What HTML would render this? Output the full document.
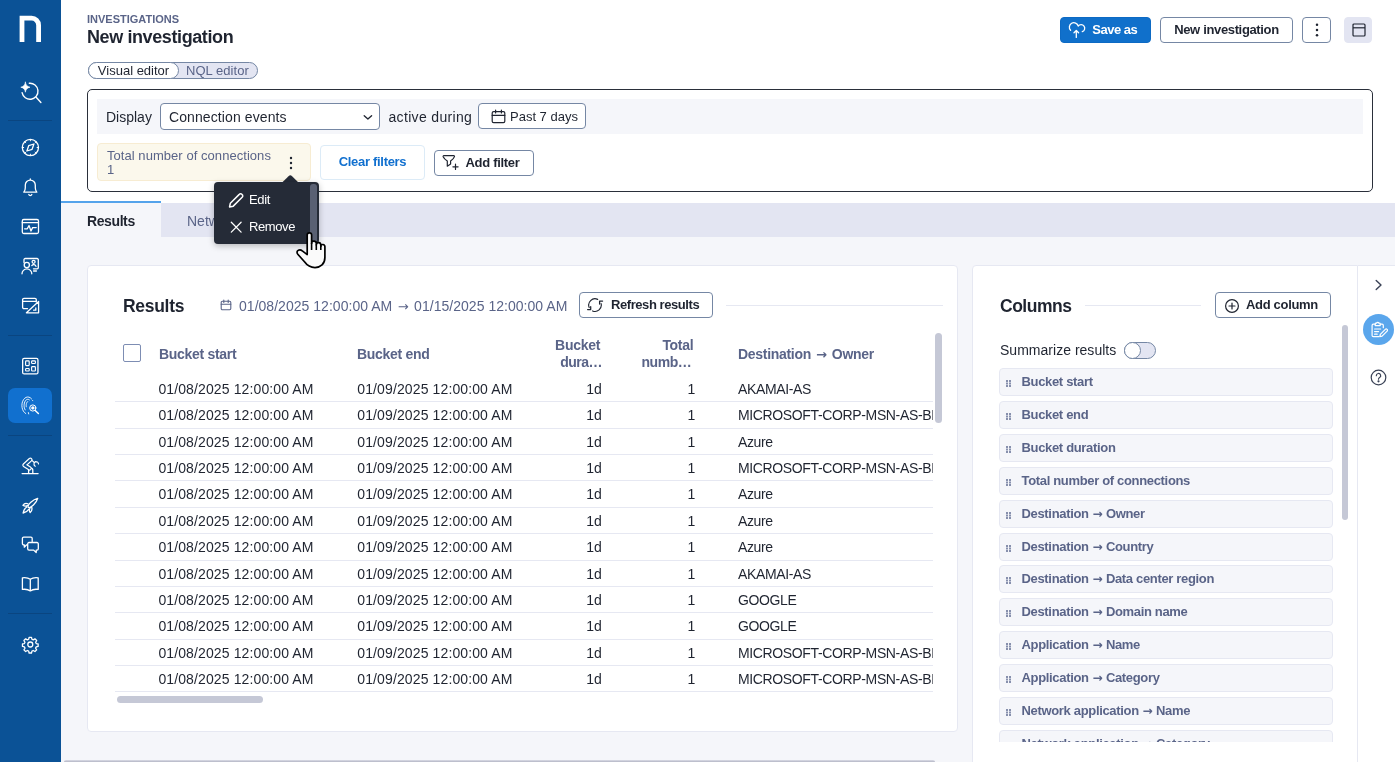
<!DOCTYPE html>
<html lang="en"><head><meta charset="utf-8"><title>New investigation</title>
<style>
*{box-sizing:border-box;margin:0;padding:0}
html,body{width:1395px;height:762px;overflow:hidden}
body{font-family:"Liberation Sans",sans-serif;color:#1f2430;background:#f5f6fa;position:relative;font-size:14px}
.abs{position:absolute}
svg{display:block}
/* sidebar */
#side{position:absolute;left:0;top:0;width:61px;height:762px;background:#0b5296}
#side .sep{position:absolute;left:8px;width:44px;height:1px;background:#0a4580}
#side .ic{position:absolute;left:18px;width:24px;height:24px}
#side .ic svg{width:24px;height:24px;fill:none;stroke:#fff;stroke-width:1.4;stroke-linecap:round;stroke-linejoin:round}
#side .act{position:absolute;left:8px;top:388px;width:44px;height:35px;border-radius:7px;background:#1170cf}
/* header */
#hdr{position:absolute;left:61px;top:0;width:1334px;height:203px;background:#fff}
.crumb{position:absolute;left:87px;top:13px;font-size:11px;font-weight:700;color:#5a6488;letter-spacing:0;line-height:13px}
.title{position:absolute;left:87px;top:25px;font-size:18px;font-weight:700;color:#1f2430;line-height:24px;letter-spacing:-.4px}
.btn{padding-bottom:1.500px;position:absolute;height:26px;border:1px solid #7587a4;border-radius:4px;background:#fff;font-weight:700;font-size:13px;color:#1f2430;display:flex;align-items:center;justify-content:center;white-space:nowrap}

.savebtn{background:#1070cb;border-color:#0d6ac4;color:#fff}
.pill{position:absolute;left:88px;top:62px;width:170px;height:17px;border:1px solid #7587a4;border-radius:9px;background:#e3e5f2;font-size:13px;line-height:15px;color:#5a6488}
.pill .on{position:absolute;left:-1px;top:-1px;width:91px;height:17px;border:1px solid #7587a4;border-radius:9px;background:#fff;color:#1f2430;text-align:center}
.pill .off{position:absolute;left:97px;top:-1px;line-height:17px;font-size:13px;letter-spacing:.05px}
#qbox{position:absolute;left:87px;top:89px;width:1285.500px;height:103px;border:1.3px solid #2a2f3a;border-radius:5px;background:#fff}
#qrow{position:absolute;left:97px;top:99px;width:1266px;height:35px;background:#f5f6fa}
.t14{position:absolute;font-size:14px;line-height:18px;white-space:nowrap}
.sel{position:absolute;left:160px;top:103px;width:220px;height:27px;border:1px solid #7587a4;border-radius:4px;background:#fff}
.chip{position:absolute;left:97px;top:143px;width:214px;height:38px;background:#fbf8ec;border:1px solid #f7ecd2;border-radius:4px}
.clear{border-color:#dcebf7;color:#1170cf;height:35px;border-radius:4px}
#tabs{position:absolute;left:61px;top:203px;width:1334px;height:34px;background:#e3e5f2}
#tabR{position:absolute;left:61px;top:201px;width:100px;height:36px;background:#f5f6fa;border-top:2px solid #54a3eb}
.pop{z-index:10;position:absolute;left:214px;top:182px;width:105px;height:62px;background:#252b37;border-radius:4px;box-shadow:0 2px 6px rgba(0,0,0,.25)}
.pop .sb{position:absolute;left:96px;top:2px;width:7px;height:57px;background:#596073;border-radius:3px 3px 0 0}
.pop .mi{position:absolute;left:35px;color:#fff;font-size:13px;line-height:16px;letter-spacing:-.15px}
.pop svg{position:absolute;left:14px;width:16px;height:16px;stroke:#fff;fill:none;stroke-width:1.3;stroke-linecap:round;stroke-linejoin:round}

#card{position:absolute;left:87px;top:265px;width:871px;height:467px;background:#fff;border:1px solid #e6e8f2;border-radius:4px}
#rcard{position:absolute;left:972px;top:265px;width:386px;height:510px;background:#fff;border:1px solid #e6e8f2;border-radius:4px 0 0 0}
#rail{position:absolute;left:1358px;top:265px;width:37px;height:497px;background:#fff;border-top:1px solid #e6e8f2}
.h2{position:absolute;font-size:19px;font-weight:700;line-height:24px;color:#1f2430;white-space:nowrap}
.th{margin-top:.6px;position:absolute;font-size:14px;font-weight:700;color:#5a6488;line-height:17px;white-space:nowrap;letter-spacing:-.3px}
#tbl{position:absolute;left:115px;top:376px;width:818px;height:320px;overflow:hidden}
.tr{position:relative;height:26.360px;border-bottom:1px solid #e6e8f2;font-size:14px;line-height:26.360px;color:#1f2430;white-space:nowrap}
.tr span{position:absolute;top:0;letter-spacing:.12px}
.c1{left:43.400px}.c2{left:242.300px}.c3{right:331px}.c4{right:237.500px}.tr span.c5{left:623px;letter-spacing:-.36px}
.ar{font-family:"DejaVu Sans","Liberation Sans",sans-serif;line-height:1}.col b{font-family:"DejaVu Sans","Liberation Sans",sans-serif;font-weight:700;font-size:12px;margin:0 .47px;line-height:1}.col{position:absolute;left:0;width:334px;height:28px;background:#f5f6fa;border:1px solid #e6e8f2;border-radius:4px;font-size:13px;font-weight:700;color:#5a6488;line-height:26px;padding-left:21.500px;white-space:nowrap;letter-spacing:-.33px}
.col i{position:absolute;left:6px;top:11px;width:2px;height:1.500px;background:#8790ad;box-shadow:3px 0 #8790ad,0 2.500px #8790ad,3px 2.500px #8790ad,0 5px #8790ad,3px 5px #8790ad}
#cols{position:absolute;left:999px;top:368px;width:334px;height:374px;overflow:hidden}
</style></head><body><div id="wrap" style="will-change:transform;position:absolute;left:0;top:0;width:1395px;height:762px">
<div id="hdr"></div>
<div id="side">
  <div class="sep" style="top:120px"></div>
  <div class="sep" style="top:335px"></div>
  <div class="act"></div>
  <div class="sep" style="top:435px"></div>
  <div class="sep" style="top:613px"></div>
</div>

<svg class="abs" style="left:0;top:0" width="61" height="762" viewBox="0 0 61 762" fill="none" stroke="#fff" stroke-width="1.300" stroke-linecap="round" stroke-linejoin="round">
 <!-- logo -->
 <path d="M22 41.900V18.200H31.600a7 7 0 0 1 7 7V41.900" stroke-width="4.800" stroke-linecap="butt" stroke-linejoin="miter"/>
 <!-- ai search -->
 <path d="M29.300 83.300A8 8 0 1 1 22.100 92.700M35.900 97l5 5.400" stroke-width="1.400"/>
 <path d="M25.400 82.200c.5 3 1.600 4.300 4.600 5-3 .7-4.100 2-4.600 5-.5-3-1.600-4.300-4.600-5 3-.7 4.100-2 4.600-5z" fill="#fff" stroke-width=".6"/>
 <!-- compass -->
 <circle cx="30.400" cy="147.500" r="8.100"/>
 <path d="M33.900 144l-1.800 5.300-5.200 1.700 1.800-5.300z"/>
 <path d="M30.400 139.400v1.400M30.400 154.200v1.400M22.300 147.500h1.400M37.100 147.500h1.400M24.700 141.800l1 1M35.100 152.200l1 1M36.100 141.800l-1 1M25.700 152.200l-1 1" stroke-width="1"/>
 <!-- bell -->
 <path d="M23.800 192.200h13c-1.100-1.300-1.500-2.600-1.500-4.500v-2.600a5 5 0 0 0-10 0v2.600c0 1.900-.4 3.200-1.500 4.500zM30.300 179v1.100M28.800 194.500a1.600 1.600 0 0 0 3 0"/>
 <!-- monitor -->
 <rect x="22.300" y="219.500" width="16.200" height="14" rx="1.500"/>
 <path d="M22.300 222.700h16.200M24.600 228.800h2.700l1.700-3.200 2 5.400 1.600-3.400h3.600"/>
 <!-- users -->
 <path d="M24 262.500v-2.800a1.200 1.200 0 0 1 1.200-1.200h11.900a1.200 1.200 0 0 1 1.200 1.200v7.900a1.200 1.200 0 0 1-1.200 1.200h-3.600M33.600 271h2.800"/>
 <circle cx="26.800" cy="265" r="2.600"/><path d="M22 273.800a4.900 4.900 0 0 1 9.800 0"/>
 <circle cx="33.600" cy="261.800" r="1.500"/><path d="M31.800 265.600a2.400 2.400 0 0 1 4.200.8"/>
 <!-- edit window -->
 <path d="M36.300 302v-2.300a1.400 1.400 0 0 0-1.400-1.400H24a1.400 1.400 0 0 0-1.400 1.400v7.600a1.400 1.400 0 0 0 1.400 1.400h3.500M22.600 301.300h13.700"/>
 <path d="M38.600 301.500v11.300H26.400zM35.800 308v2.200h-2.200" />
 <!-- apps -->
 <rect x="22.650" y="358.450" width="15.300" height="15.500" rx="1.500"/>
 <g stroke-width="1.150"><rect x="25.600" y="360.900" width="3.600" height="4.700" rx=".8"/><rect x="31.600" y="360.900" width="3.800" height="2.600" rx=".8"/>
 <rect x="25.600" y="368.500" width="3.600" height="2.500" rx=".8"/><rect x="31.600" y="366.600" width="3.800" height="4.400" rx=".8"/></g>
 <!-- fingerprint search -->
 <g stroke-width=".9">
 <path d="M31.59 398.99 L30.36 397.84 L28.97 397.17 L27.51 397.01 L26.06 397.38 L24.72 398.25 L23.58 399.56 L22.69 401.25 L22.12 403.20 L21.90 405.29 L22.05 407.39 L22.55 409.38 L23.38 411.12 L24.48 412.52 L25.78 413.49 M29.36 399.88 L28.67 399.47 L27.94 399.30 L27.20 399.38 L26.49 399.70 L25.83 400.25 L25.25 401.01 L24.77 401.94 L24.41 403.02 L24.18 404.20 L24.10 405.42 L24.16 406.65 L24.37 407.84 L24.72 408.93 L25.18 409.88 M27.80 401.70 L27.58 401.74 L27.37 401.84 L27.16 402.02 L26.97 402.26 L26.79 402.56 L26.63 402.92 L26.49 403.32 L26.38 403.77 L26.29 404.24 L26.23 404.75 L26.20 405.26 L26.20 405.78 L26.24 406.30 L26.30 406.80 M28.400 412.600l.3 1.300M32.600 400.500l.1.200"/>
 <circle cx="32.800" cy="408" r="3.100" fill="#1170cf" stroke-width="1"/><circle cx="32.800" cy="408" r="1.400" fill="#fff" stroke-width=".4"/><path d="M35.200 410.400l3.200 3.200" stroke-width="1.400"/>
 </g>
 <!-- robot arm -->
 <path d="M22.100 473.600H38.100M28.600 473.400V470.300a2.100 2.100 0 0 1 4.200 0V473.400"/>
 <path d="M30.400 459.700 24.400 465.100 29.600 468.400" stroke-width="4.300"/>
 <path d="M30.400 459.700 24.400 465.100 29.600 468.400" stroke="#0b5296" stroke-width="1.900"/>
 <path d="M32.200 460.600l2 1.900M35.900 461.700a2.500 2.500 0 0 0-.700 4.600M35.600 461.600a2.600 2.600 0 0 1 2.900 2.300" stroke-width="1.200"/>
 <!-- rocket -->
 <path d="M28.200 507.400C30.720 508.590 36.470 502.800 37.700 498.300C33.150 499.340 27.120 504.830 28.200 507.400Z"/>
 <path d="M27.900 503.900C26 503 24 503.800 22.900 505.300C24.500 506.300 26.300 506.100 27.500 505.600M31.700 507.300C32.300 509.400 31.700 511.400 30.200 512.600C29.200 511 29.300 509.300 29.900 508.300M26.500 507.300C24.600 508.600 23.400 510.600 23.100 513C25.400 512.600 27.400 511.400 28.700 509.400"/>
 <!-- chat -->
 <path d="M32.200 541.500v-3a1.300 1.300 0 0 0-1.300-1.300h-7.200a1.300 1.300 0 0 0-1.300 1.300v5a1.300 1.300 0 0 0 1.300 1.300h.6v2.400l2.300-2.400h.6"/>
 <path d="M29 542.500h8a1.300 1.300 0 0 1 1.300 1.300v5a1.300 1.300 0 0 1-1.300 1.300h-.8v2.500l-2.500-2.500H29a1.300 1.300 0 0 1-1.300-1.300v-5a1.300 1.300 0 0 1 1.300-1.300z"/>
 <!-- book -->
 <path d="M30.300 579.300c-2-1.500-4.600-1.900-7.900-1.500v11.600c3.300-.4 5.900 0 7.900 1.500 2-1.500 4.600-1.900 7.900-1.500v-11.600c-3.300-.4-5.900 0-7.900 1.500zM30.300 579.300v11.600"/>
 <!-- gear -->
 <g transform="translate(30.300 644.500) scale(.86) translate(-30.300 -644.500)" stroke-width="1.500">
 <circle cx="30.300" cy="644.500" r="2.900"/>
 <path d="M28.900 636.200h2.800l.5 2.200 1.500.7 2-1.200 2 2-1.200 2 .7 1.500 2.200.5v2.800l-2.200.5-.7 1.500 1.200 2-2 2-2-1.200-1.500.7-.5 2.200h-2.800l-.5-2.200-1.500-.7-2 1.200-2-2 1.200-2-.7-1.500-2.200-.5v-2.800l2.200-.5.700-1.500-1.200-2 2-2 2 1.200 1.500-.7z"/>
</g>
</svg>
<div class="crumb">INVESTIGATIONS</div>
<div class="title">New investigation</div>

<div class="btn savebtn" style="left:1060px;top:17px;width:91px;justify-content:flex-start;padding-left:31.300px;letter-spacing:-.5px">Save as
 <svg class="abs" style="left:6px;top:3px" width="20" height="20" viewBox="0 0 20 20" fill="none" stroke="#fff" stroke-width="1.300" stroke-linecap="round" stroke-linejoin="round"><path d="M3.600 9.300A4.500 4.500 0 1 1 11.200 5A3.650 3.650 0 1 1 15.300 10.700"/><path d="M9.300 16.400V9.600M7 11.800 9.300 9.500l2.300 2.300"/></svg>
</div>
<div class="btn" style="left:1160px;top:17px;width:133px;letter-spacing:-.35px">New investigation</div>
<div class="btn" style="left:1302px;top:17px;width:29px;padding-bottom:0"><svg width="4" height="14" viewBox="0 0 4 14" fill="#1f2430"><circle cx="2" cy="1.800" r="1.250"/><circle cx="2" cy="7" r="1.250"/><circle cx="2" cy="12.200" r="1.250"/></svg></div>
<div class="btn" style="left:1344px;top:17px;width:28px;border-color:#e3e5f2;background:#e3e5f2;padding-bottom:0;padding-left:1px"><svg width="14" height="14" viewBox="0 0 14 14" fill="none" stroke="#1f2430" stroke-width="1.2"><rect x="1" y="1" width="12" height="12" rx="1"/><path d="M1 4.8h12"/></svg></div>

<div class="pill"><div class="on">Visual editor</div><div class="off">NQL editor</div></div>

<div id="qbox"></div>
<div id="qrow"></div>
<div class="t14" style="left:106px;top:108px">Display</div>
<div class="sel"><div class="t14" style="left:8px;top:4px;letter-spacing:.1px">Connection events</div>
 <svg class="abs" style="left:201px;top:9px" width="11" height="8" viewBox="0 0 11 8" fill="none" stroke="#1f2430" stroke-width="1.300" stroke-linecap="round" stroke-linejoin="round"><path d="M2.200 2.700 5.900 6.100l3.700-3.400"/></svg></div>
<div class="t14" style="left:388.500px;top:108px;letter-spacing:.33px">active during</div>
<div class="btn" style="left:478px;top:103px;width:108px;font-weight:400;justify-content:flex-start;padding-left:31px;padding-bottom:0">Past 7 days
 <svg class="abs" style="left:12px;top:5px" width="15" height="15" viewBox="0 0 15 15" fill="none" stroke="#1f2430" stroke-width="1.2" stroke-linecap="round" stroke-linejoin="round"><rect x="1.2" y="2.6" width="12.6" height="11" rx="1.4"/><path d="M1.2 6.4h12.6M4.6 1v3M10.4 1v3"/></svg>
</div>

<div class="chip">
 <div class="abs" style="left:9px;top:5px;font-size:13px;line-height:14px;color:#5a6488;white-space:nowrap;letter-spacing:.05px">Total number of connections</div>
 <div class="abs" style="left:9px;top:19px;font-size:13px;line-height:14px;color:#5a6488">1</div>
 <svg class="abs" style="left:191px;top:12px" width="4" height="14" viewBox="0 0 4 14" fill="#1f2430"><circle cx="2" cy="2" r="1.2"/><circle cx="2" cy="7" r="1.2"/><circle cx="2" cy="12" r="1.2"/></svg>
</div>
<div class="btn clear" style="left:320px;top:145px;width:105px;letter-spacing:-.3px">Clear filters</div>
<div class="btn" style="left:434px;top:150px;width:100px;justify-content:flex-start;padding-left:30.500px;letter-spacing:-.3px">Add filter
 <svg class="abs" style="left:7px;top:3px" width="18" height="18" viewBox="0 0 18 18" fill="none" stroke="#1f2430" stroke-width="1.200" stroke-linecap="round" stroke-linejoin="round"><path d="M1.800 1.700H11.800a.7.7 0 0 1 .65.950C11.900 4.400 10.400 5.700 8.600 7V10.100L5.300 12.200V7C3.500 5.700 2 4.400 1.150 2.650a.7.7 0 0 1 .65-.950z"/><path d="M13.500 10.200v5.200M10.900 12.800h5.200"/></svg>
</div>

<div id="tabs"></div>
<div id="tabR"></div>
<div class="t14" style="left:87px;top:211.500px;font-weight:700;letter-spacing:-.4px">Results</div>
<div class="t14" style="left:187px;top:211.500px;color:#5a6488">Network</div>

<div class="abs" style="z-index:9;left:284.200px;top:177.300px;width:12.600px;height:12.600px;background:#252b37;border-radius:2.500px 0 0 0;transform:rotate(45deg)"></div>
<div class="pop">
 <div class="sb"></div>
 <svg style="top:8.700px;left:12.500px;width:18.500px;height:18.500px" viewBox="0 0 16 16"><path d="M2.2 13.8l.7-3.2 7.7-7.7a1.55 1.55 0 0 1 2.3 0l.2.2a1.55 1.55 0 0 1 0 2.300L5.400 13.100z"/></svg>
 <div class="mi" style="top:10px;letter-spacing:-.35px">Edit</div>
 <svg style="top:36.500px" viewBox="0 0 16 16"><path d="M3.300 3.300l9.800 9.800M13.100 3.300l-9.800 9.800"/></svg>
 <div class="mi" style="top:36.700px;letter-spacing:-.4px">Remove</div>
</div>
<svg class="abs" style="left:290px;top:225px;z-index:20" width="40" height="48" viewBox="0 0 40 48"><path d="M17.200 29.600V10.100a2.200 2.200 0 0 1 4.400 0v8.300a2.350 2.350 0 0 1 4.700 .2v1.200a2.250 2.250 0 0 1 4.500 .3v1.300a2.050 2.050 0 0 1 4.100 .3V32.500C34.900 39 30.500 42.600 25 42.600c-5 0-8-2.300-10.500-5.800L7.800 29.200c-1.300-1.600-.9-3.300 .5-4 1.300-.7 2.900-.3 4 .7z" fill="#fafafa" stroke="#000" stroke-width="1.700" stroke-linejoin="round"/><path d="M21.600 18v7M26.300 19.500v5.500M30.800 21v4" stroke="#000" stroke-width="1.600" stroke-linecap="butt"/></svg>

<div id="card"></div>
<div class="h2" style="left:123px;top:294px;letter-spacing:-.3px;font-size:17.500px">Results</div>
<svg class="abs" style="left:220px;top:299px" width="12" height="12" viewBox="0 0 12 12" fill="none" stroke="#5a6488" stroke-width="1.100" stroke-linecap="round" stroke-linejoin="round"><rect x="1.200" y="2.200" width="9.600" height="8.600" rx="1.200"/><path d="M1.200 5.200h9.600M3.800 1v2.400M8.200 1v2.400"/></svg>
<div class="t14" style="left:239px;top:296.600px;color:#5a6488;letter-spacing:.03px">01/08/2025 12:00:00 AM <span class="ar" style="font-size:13px;margin:0 1.550px">→</span> 01/15/2025 12:00:00 AM</div>
<div class="btn" style="left:579px;top:292px;width:134px;justify-content:flex-start;padding-left:31px;letter-spacing:-.43px">Refresh results
 <svg class="abs" style="left:6px;top:4px" width="18" height="18" viewBox="0 0 18 18" fill="none" stroke="#1f2430" stroke-width="1.150" stroke-linecap="round" stroke-linejoin="round"><path d="M11.660 2.390A6.300 6.300 0 0 0 3.200 10.560M6.570 13.910A6.300 6.300 0 0 0 15.110 6.580"/><path d="M1.600 12.500H4.700V9.600M16.600 4.100H13.600V7.100" stroke-width="1.250"/></svg>
</div>
<div class="abs" style="left:726px;top:305px;width:217px;height:1px;background:#e6e8f2"></div>
<div class="abs" style="left:123px;top:344px;width:18px;height:18px;border:1px solid #7d8db3;border-radius:2px;background:#fff"></div>
<div class="th" style="left:159px;top:345px">Bucket start</div>
<div class="th" style="left:357px;top:345px">Bucket end</div>
<div class="th" style="right:795px;top:336px;text-align:right">Bucket<br><span style="margin-right:-2px;letter-spacing:-.5px">dura…</span></div>
<div class="th" style="right:701.700px;top:336px;text-align:right">Total<br><span style="margin-right:2px;letter-spacing:-.45px">numb…</span></div>
<div class="th" style="left:738px;top:345px">Destination <span class="ar" style="font-size:13px;margin:0 1.550px">→</span> Owner</div>
<div id="tbl">
<div class="tr"><span class="c1">01/08/2025 12:00:00 AM</span><span class="c2">01/09/2025 12:00:00 AM</span><span class="c3">1d</span><span class="c4">1</span><span class="c5">AKAMAI-AS</span></div>
<div class="tr"><span class="c1">01/08/2025 12:00:00 AM</span><span class="c2">01/09/2025 12:00:00 AM</span><span class="c3">1d</span><span class="c4">1</span><span class="c5">MICROSOFT-CORP-MSN-AS-BLOCK</span></div>
<div class="tr"><span class="c1">01/08/2025 12:00:00 AM</span><span class="c2">01/09/2025 12:00:00 AM</span><span class="c3">1d</span><span class="c4">1</span><span class="c5">Azure</span></div>
<div class="tr"><span class="c1">01/08/2025 12:00:00 AM</span><span class="c2">01/09/2025 12:00:00 AM</span><span class="c3">1d</span><span class="c4">1</span><span class="c5">MICROSOFT-CORP-MSN-AS-BLOCK</span></div>
<div class="tr"><span class="c1">01/08/2025 12:00:00 AM</span><span class="c2">01/09/2025 12:00:00 AM</span><span class="c3">1d</span><span class="c4">1</span><span class="c5">Azure</span></div>
<div class="tr"><span class="c1">01/08/2025 12:00:00 AM</span><span class="c2">01/09/2025 12:00:00 AM</span><span class="c3">1d</span><span class="c4">1</span><span class="c5">Azure</span></div>
<div class="tr"><span class="c1">01/08/2025 12:00:00 AM</span><span class="c2">01/09/2025 12:00:00 AM</span><span class="c3">1d</span><span class="c4">1</span><span class="c5">Azure</span></div>
<div class="tr"><span class="c1">01/08/2025 12:00:00 AM</span><span class="c2">01/09/2025 12:00:00 AM</span><span class="c3">1d</span><span class="c4">1</span><span class="c5">AKAMAI-AS</span></div>
<div class="tr"><span class="c1">01/08/2025 12:00:00 AM</span><span class="c2">01/09/2025 12:00:00 AM</span><span class="c3">1d</span><span class="c4">1</span><span class="c5">GOOGLE</span></div>
<div class="tr"><span class="c1">01/08/2025 12:00:00 AM</span><span class="c2">01/09/2025 12:00:00 AM</span><span class="c3">1d</span><span class="c4">1</span><span class="c5">GOOGLE</span></div>
<div class="tr"><span class="c1">01/08/2025 12:00:00 AM</span><span class="c2">01/09/2025 12:00:00 AM</span><span class="c3">1d</span><span class="c4">1</span><span class="c5">MICROSOFT-CORP-MSN-AS-BLOCK</span></div>
<div class="tr"><span class="c1">01/08/2025 12:00:00 AM</span><span class="c2">01/09/2025 12:00:00 AM</span><span class="c3">1d</span><span class="c4">1</span><span class="c5">MICROSOFT-CORP-MSN-AS-BLOCK</span></div>
</div>
<div class="abs" style="left:935px;top:333px;width:7px;height:90px;border-radius:4px;background:#c5c8d6"></div>
<div class="abs" style="left:117px;top:696px;width:146px;height:7px;border-radius:3.500px;background:#c5c8d6"></div>

<div id="rcard"></div>
<div id="rail"></div>
<div class="h2" style="left:1000px;top:294px;letter-spacing:-.5px;font-size:17.500px">Columns</div>
<div class="abs" style="left:1085px;top:305px;width:116px;height:1px;background:#e6e8f2"></div>
<div class="btn" style="left:1215px;top:292px;width:116px;justify-content:flex-start;padding-left:30px;letter-spacing:-.32px">Add column
 <svg class="abs" style="left:8px;top:5px" width="16" height="16" viewBox="0 0 16 16" fill="none" stroke="#1f2430" stroke-width="1.200" stroke-linecap="round"><circle cx="8" cy="8" r="6.400"/><path d="M8 5v6M5 8h6"/></svg>
</div>
<div class="t14" style="left:1000px;top:341px;letter-spacing:.02px">Summarize results</div>
<div class="abs" style="left:1124px;top:342px;width:31.500px;height:17px;border:1px solid #7587a4;border-radius:9px;background:#e3e5f2"><div class="abs" style="left:-1px;top:-1px;width:17px;height:17px;border:1px solid #7587a4;border-radius:9px;background:#fff"></div></div>
<div id="cols">
<div class="col" style="top:0px"><i></i>Bucket start</div>
<div class="col" style="top:33px"><i></i>Bucket end</div>
<div class="col" style="top:66px"><i></i>Bucket duration</div>
<div class="col" style="top:99px"><i></i>Total number of connections</div>
<div class="col" style="top:132px"><i></i>Destination <b>→</b> Owner</div>
<div class="col" style="top:165px"><i></i>Destination <b>→</b> Country</div>
<div class="col" style="top:197px"><i></i>Destination <b>→</b> Data center region</div>
<div class="col" style="top:230px"><i></i>Destination <b>→</b> Domain name</div>
<div class="col" style="top:263px"><i></i>Application <b>→</b> Name</div>
<div class="col" style="top:296px"><i></i>Application <b>→</b> Category</div>
<div class="col" style="top:329px"><i></i>Network application <b>→</b> Name</div>
<div class="col" style="top:362px"><i></i>Network application <b>→</b> Category</div>
</div>
<div class="abs" style="left:1342px;top:325px;width:6px;height:195px;border-radius:3px;background:#c5c8d6"></div>
<svg class="abs" style="left:1373px;top:278px" width="10" height="14" viewBox="0 0 10 14" fill="none" stroke="#3a4256" stroke-width="1.400" stroke-linecap="round" stroke-linejoin="round"><path d="M3.200 2.400 8 7l-4.800 4.600"/></svg>
<div class="abs" style="left:1362.700px;top:314px;width:31px;height:31px;border-radius:16px;background:#5aa6ec"></div>
<svg class="abs" style="left:1370px;top:321px" width="18" height="17" viewBox="0 0 18 17" fill="none" stroke="#fff" stroke-width="1.200" stroke-linecap="round" stroke-linejoin="round"><path d="M5 3.200H3.300A1.200 1.200 0 0 0 2.100 4.400v10a1.200 1.200 0 0 0 1.200 1.200H9M10.400 3.200h1.700a1.200 1.200 0 0 1 1.200 1.200v2.300"/><path d="M5.200 4.600V3c0-.5.300-.8.800-.8h.5a1.300 1.300 0 0 1 2.400 0h.5c.5 0 .8.300.8.800v1.600z"/><path d="M4.600 8h6M4.600 10.600h4M4.600 13.200h2.600"/><path d="M9.800 15.700l.5-2.300 5-5a1.200 1.200 0 0 1 1.800 1.800l-5 5z"/></svg>
<svg class="abs" style="left:1370px;top:369px" width="17" height="17" viewBox="0 0 17 17" fill="none" stroke="#3a4256" stroke-width="1.200" stroke-linecap="round"><circle cx="8.500" cy="8.500" r="7.300"/><path d="M6.300 6.700a2.200 2.200 0 1 1 3.300 1.900c-.7.400-1.100.8-1.100 1.600"/><circle cx="8.500" cy="12.300" r=".5" fill="#3a4256"/></svg>
<div class="abs" style="left:64px;top:760px;width:871px;height:2px;background:linear-gradient(#dcdde7,#b3b5c4);border-radius:2px 2px 0 0"></div>
</div></body></html>
